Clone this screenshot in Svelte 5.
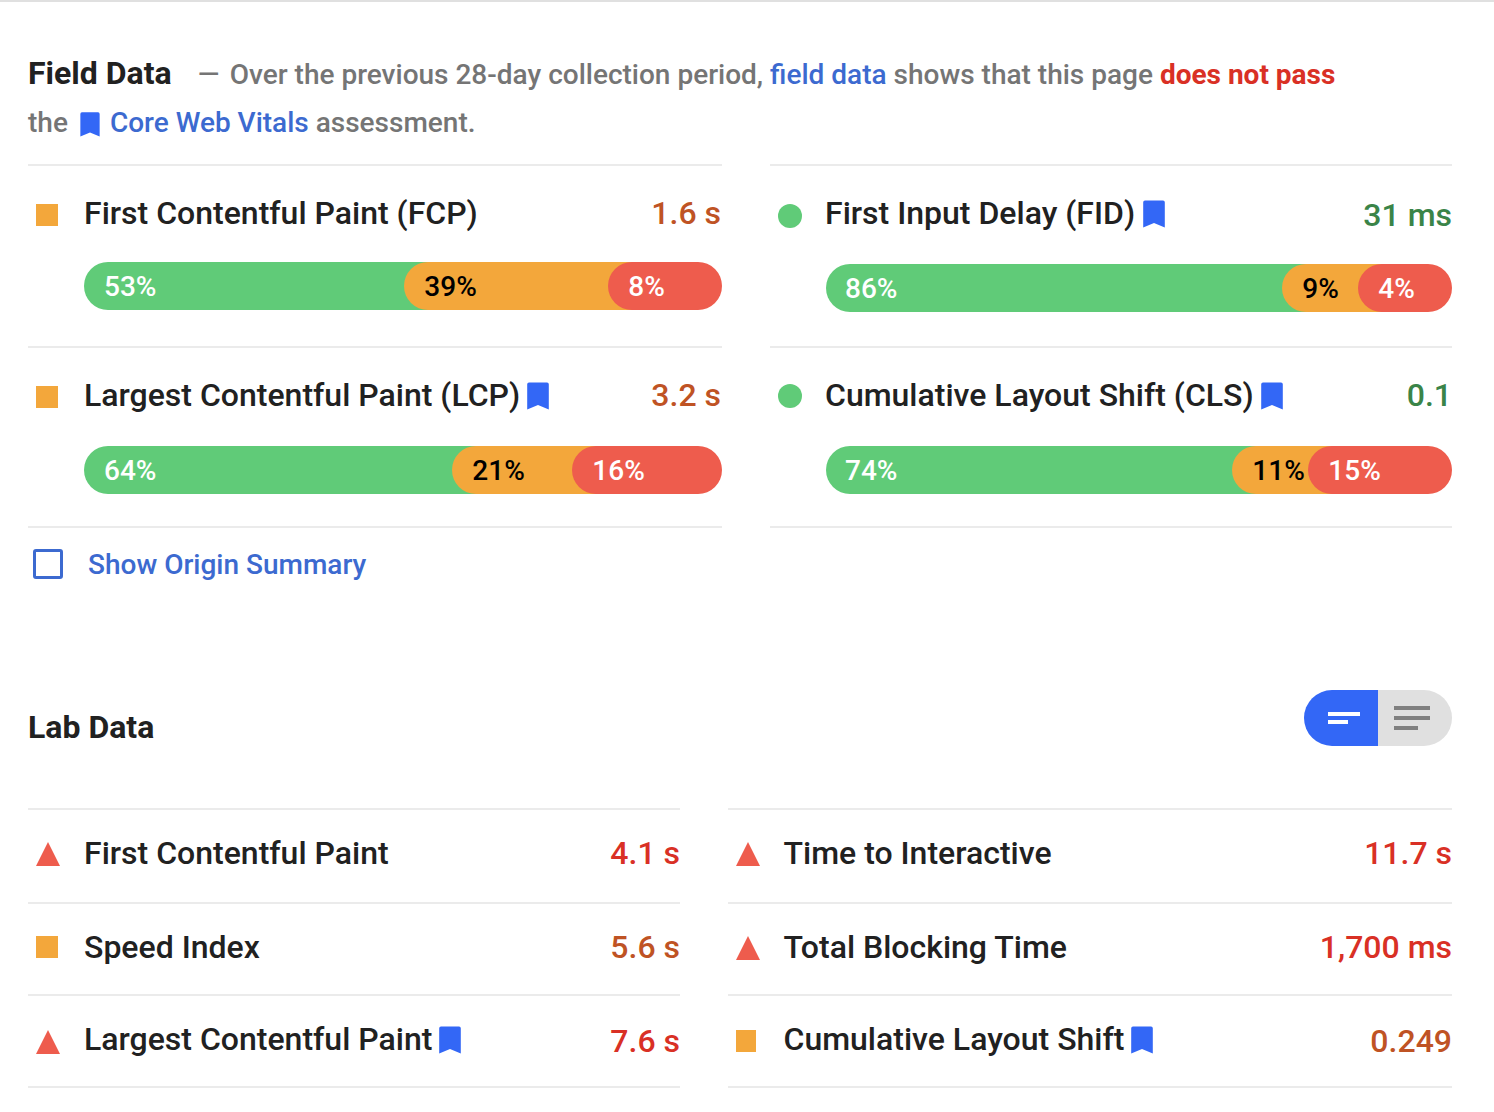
<script>
  const field = [
    {
      tone: 'average', name: 'First Contentful Paint (FCP)', value: '1.6 s', cls: 'row-a left',
      bars: [['53%', 344], ['39%', 228], ['8%', 114]]
    },
    {
      tone: 'good', name: 'First Input Delay (FID)', value: '31 ms', vital: true, cls: 'row-a low right',
      bars: [['86%', 480], ['9%', 100], ['4%', 94]]
    },
    {
      tone: 'average', name: 'Largest Contentful Paint (LCP)', value: '3.2 s', vital: true, cls: 'row-b left',
      bars: [['64%', 392], ['21%', 144], ['16%', 150]]
    },
    {
      tone: 'good', name: 'Cumulative Layout Shift (CLS)', value: '0.1', vital: true, cls: 'row-b right',
      bars: [['74%', 430], ['11%', 100], ['15%', 144]]
    }
  ];
  const lab = [
    { tone: 'poor', name: 'First Contentful Paint', value: '4.1 s', cls: 'first' },
    { tone: 'poor', name: 'Time to Interactive', value: '11.7 s', cls: 'first right' },
    { tone: 'average', name: 'Speed Index', value: '5.6 s', cls: '' },
    { tone: 'poor', name: 'Total Blocking Time', value: '1,700 ms', cls: 'right' },
    { tone: 'poor', name: 'Largest Contentful Paint', value: '7.6 s', vital: true, cls: 'last' },
    { tone: 'average', name: 'Cumulative Layout Shift', value: '0.249', vital: true, narrow: true, cls: 'last right' }
  ];
  const segments = ['good', 'average', 'poor'];
</script>

{#snippet bookmark(kind)}
  <svg class="bookmark {kind}" viewBox="0 0 22 28">
    <path d="M2 0.4H20Q21.8 0.4 21.8 2.2V27.4L11 23L0.2 27.4V2.2Q0.2 0.4 2 0.4Z" />
  </svg>
{/snippet}

{#snippet shape(tone, narrow)}
  <svg class="shape {tone}" viewBox="0 0 24 24">
    {#if tone === 'good'}
      <circle cx="12" cy="12" r="12" />
    {:else if tone === 'average'}
      <rect width={narrow ? 20 : 22} height="22" />
    {:else}
      <path d="M12 0L24 24H0Z" />
    {/if}
  </svg>
{/snippet}

{#snippet heading(m)}
  <div class="line">
    <span class="icon">{@render shape(m.tone, m.narrow)}</span>
    <span class="name">{m.name}</span>
    {#if m.vital}{@render bookmark('large')}{/if}
    <span class="value {m.tone}">{m.value}</span>
  </div>
{/snippet}

<main>
  <header>
    <p><strong class="title">Field Data</strong><span class="dash">—</span><span>Over the previous 28-day collection period, <a>field data</a> shows that this page <b>does not pass</b></span></p>
    <p class="second"><span>the</span>{@render bookmark('small')}<span><a>Core Web Vitals</a> assessment.</span></p>
  </header>

  <section class="field">
    {#each field as m}
      <article class="metric {m.cls}">
        {@render heading(m)}
        <div class="bar">
          {#each m.bars as [label, width], i}
            <div class="segment {segments[i]}" style="width: {width}px">{label}</div>
          {/each}
        </div>
      </article>
    {/each}
  </section>

  <label class="origin"><span class="box"></span><span class="origin-text">Show Origin Summary</span></label>

  <div class="lab-head">
    <h2 class="title">Lab Data</h2>
    <div class="toggle">
      <div class="on">
        <svg viewBox="0 0 74 56"><path d="M24 22h32v4H24zM24 30h20v4H24z" /></svg>
      </div>
      <div class="off">
        <svg viewBox="0 0 74 56"><path d="M16 16h36v4H16zM16 26h36v4H16zM16 36h24v4H16z" /></svg>
      </div>
    </div>
  </div>

  <section class="lab">
    {#each lab as m}
      <article class="metric {m.cls}">
        {@render heading(m)}
      </article>
    {/each}
  </section>
</main>

<style>
  :global(body) { margin: 0; background: #fff; }
  main {
    box-sizing: border-box;
    height: 1112px;
    padding: 47px 42px 0 28px;
    border-top: 2px solid #e0e0e0;
    font: 500 28px/48px Roboto, sans-serif;
    color: #212121;
    overflow: hidden;
  }
  header { height: 115px; color: #757575; }
  p { display: flex; height: 48px; margin: 0; white-space: pre; align-items: baseline; }
  .second { padding-top: 2px; }
  a { color: #3c6ad0; }
  b { font-weight: 700; color: #d93025; }
  .title { margin: 0; font-size: 32px; font-weight: 700; line-height: 48px; color: #212121; }
  .dash { margin: 0 10.5px 0 26px; }
  .bookmark { flex: none; fill: #3367f6; }
  .small { width: 20px; height: 25px; margin: 2px 10px 0 12px; align-self: center; }
  .large { width: 22px; height: 28px; margin: 7px 0 0 7.5px; }
  section { display: grid; column-gap: 48px; }
  .field { grid-template-columns: 694px 682px; }
  .lab { grid-template-columns: 652px 724px; }
  .metric { box-sizing: border-box; border-top: 2px solid #ebebeb; }
  .row-a { height: 182px; padding-top: 27px; }
  .row-b { height: 182px; padding-top: 27px; border-bottom: 2px solid #ebebeb; }
  .line { display: flex; height: 40px; font-size: 32px; line-height: 40px; white-space: nowrap; }
  .icon { flex: none; width: 48px; padding-left: 8px; }
  .field .right .icon { width: 47px; }
  .lab .right .icon { width: 47.5px; }
  .shape { display: block; width: 24px; height: 24px; margin-top: 11px; }
  .value { margin-left: auto; }
  .field .left .value { padding-right: 1px; }
  .row-b .shape.good { margin-top: 9px; }
  .row-b .bookmark, .lab .bookmark { margin-left: 7px; }
  .low .value { padding-top: 2px; }
  .shape.good { fill: #60cb78; }
  .shape.average { fill: #f3a73b; }
  .shape.poor { fill: #ee5c4d; }
  .value.good { color: #3a8448; }
  .value.average { color: #bf5324; }
  .value.poor { color: #d93025; }
  .bar { display: flex; height: 48px; margin: 31px 0 0 56px; font-size: 28px; line-height: 50px; }
  .row-a:not(.low) .bar { margin-top: 29px; }
  .segment { box-sizing: border-box; flex: none; height: 48px; padding-left: 20.3px; color: #fff; white-space: nowrap; }
  .segment.good { padding-left: 20px; background: #60cb78; border-radius: 24px 0 0 24px; }
  .right .segment.good { padding-left: 19px; }
  .segment.average { margin-left: -24px; background: #f3a73b; color: #000; border-radius: 24px 0 0 24px; }
  .segment.poor { margin-left: -24px; background: #ee5c4d; border-radius: 24px; }
  .origin { display: flex; height: 48px; margin-top: 12px; padding-left: 5px; color: #3c6ad0; }
  .origin-text { line-height: 50px; }
  .box { box-sizing: border-box; width: 30px; height: 30px; margin: 9px 25px 0 0; border: 3px solid #3c6ad0; border-radius: 3px; }
  .lab-head { display: flex; height: 118px; margin-top: 102px; justify-content: space-between; }
  .lab-head .title { padding-top: 13px; }
  .toggle { display: flex; width: 148px; height: 56px; border-radius: 28px; overflow: hidden; }
  .toggle svg { display: block; width: 74px; height: 56px; }
  .on { background: #3367f6; fill: #fff; }
  .off { background: #e0e0e0; fill: #808080; }
  .lab .metric { height: 92px; padding-top: 23px; }
  .lab .shape { margin-top: 9px; }
  .lab .first { height: 94px; }
  .lab .last { height: 94px; border-bottom: 2px solid #ebebeb; }
  .lab .last .shape { margin-top: 11px; }
  .lab .last .value { padding-top: 2px; }
</style>
